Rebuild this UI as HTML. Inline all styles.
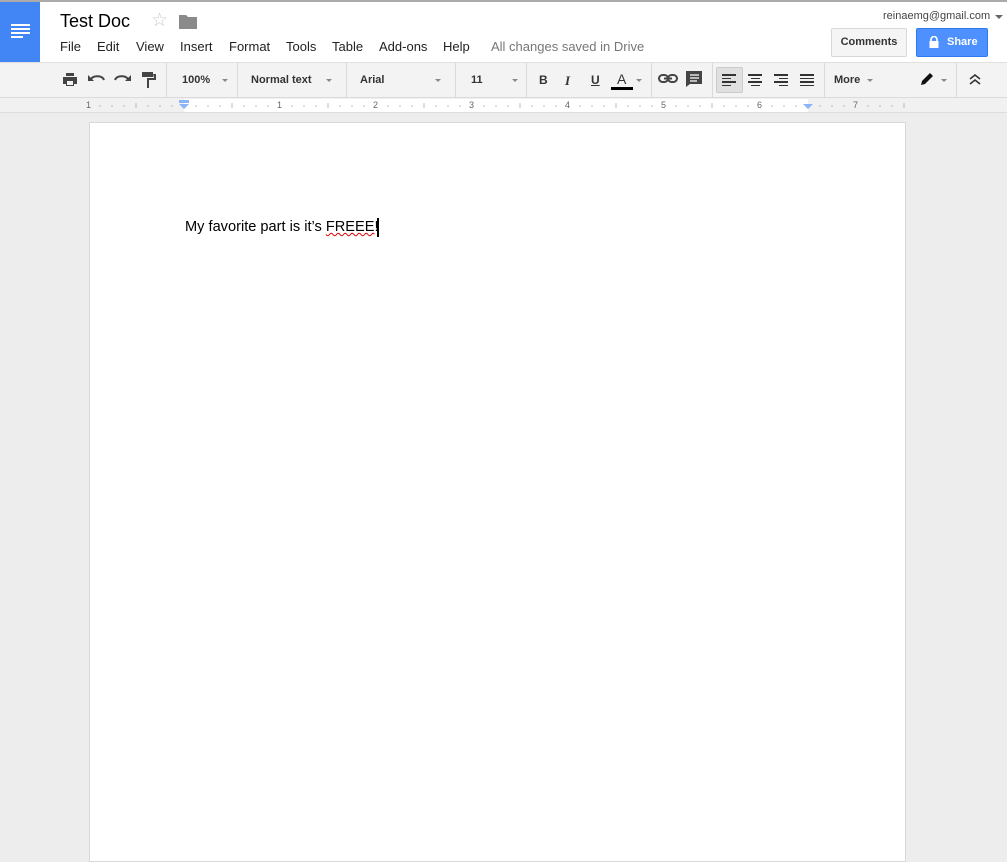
<!DOCTYPE html>
<html><head><style>
*{margin:0;padding:0;box-sizing:border-box}
body{width:1007px;height:850px;overflow:hidden;background:#ededed;font-family:"Liberation Sans",Arial,sans-serif;position:relative}
.a{position:absolute}
.menu span{position:absolute;top:39px;font-size:13px;color:#222}
.tb{font-size:11px;font-weight:bold;color:#333}
.sep{position:absolute;top:63px;width:1px;height:34px;background:#dadada}
.dd{position:absolute;width:0;height:0;border-left:3px solid transparent;border-right:3px solid transparent;border-top:3px solid #888}
.al div{height:1.5px;background:#333;margin-bottom:2px}
</style></head><body>
<div class="a" style="left:0;top:0;width:1007px;height:2px;background:#aaa"></div>
<div class="a" style="left:0;top:2px;width:1007px;height:60px;background:#fff"></div>
<div class="a" style="left:0;top:2px;width:40px;height:60px;background:#4285f4"></div>
<div class="a" style="left:11px;top:24px;width:19px">
<div style="height:2px;background:#fff;margin-bottom:2px"></div><div style="height:2px;background:#fff;margin-bottom:2px"></div><div style="height:2px;background:#fff;margin-bottom:2px"></div><div style="height:2px;width:12px;background:#fff"></div></div>
<div class="a" style="left:60px;top:11px;font-size:18px;color:#000">Test Doc</div>
<div class="a" style="left:151px;top:9px;font-size:19px;color:#ccc">☆</div>
<svg class="a" style="left:179px;top:14px" width="18" height="15"><path d="M0 1h7l2 2h9v12H0z" fill="#8a8a8a"/></svg>
<div class="menu">
<span style="left:60px">File</span><span style="left:97px">Edit</span><span style="left:136px">View</span><span style="left:180px">Insert</span><span style="left:229px">Format</span><span style="left:286px">Tools</span><span style="left:332px">Table</span><span style="left:379px">Add-ons</span><span style="left:443px">Help</span><span style="left:491px;color:#777">All changes saved in Drive</span></div>
<div class="a" style="left:883px;top:10px;font-size:11px;color:#444">reinaemg@gmail.com</div>
<div class="dd" style="left:995px;top:15px;border-top-color:#666;border-width:4px 4px 0"></div>
<div class="a" style="left:831px;top:28px;width:76px;height:29px;border:1px solid #d8d8d8;border-radius:2px;background:#f5f5f5;font-size:11px;font-weight:bold;color:#333;text-align:center;line-height:27px">Comments</div>
<div class="a" style="left:916px;top:28px;width:72px;height:29px;border:1px solid #3079ed;border-radius:2px;background:#4d90fe;font-size:11px;font-weight:bold;color:#fff;line-height:27px;padding-left:30px">Share</div>
<svg class="a" style="left:929px;top:36px" width="10" height="12"><path d="M2 5V3.5a3 3 0 0 1 6 0V5" stroke="#fff" stroke-width="1.6" fill="none"/><rect x="0.5" y="5" width="9" height="7" fill="#fff"/></svg>
<div class="a" style="left:0;top:62px;width:1007px;height:36px;background:#f3f3f3;border-top:1px solid #e0e0e0;border-bottom:1px solid #dadada"></div>
<svg class="a" style="left:62px;top:72px" width="16" height="15"><path d="M4 1h8v3H4zM1 5h14v7h-3v2H4v-2H1z" fill="#444"/><rect x="5" y="9" width="6" height="4" fill="#f3f3f3"/></svg>
<svg class="a" style="left:88px;top:73px" width="17" height="10"><path d="M3 6a7 5 0 0 1 13 1" stroke="#444" stroke-width="2" fill="none"/><path d="M0 2v6h6z" fill="#444"/></svg>
<svg class="a" style="left:114px;top:73px" width="17" height="10"><path d="M14 6a7 5 0 0 0-13 1" stroke="#444" stroke-width="2" fill="none"/><path d="M17 2v6h-6z" fill="#444"/></svg>
<svg class="a" style="left:141px;top:71px" width="16" height="18"><path d="M1 1h11v5H1zM12 3h3v6H8v8H6V7h7z" fill="#444"/></svg>
<div class="sep" style="left:166px"></div>
<div class="a tb" style="left:182px;top:74px">100%</div><div class="dd" style="left:222px;top:79px"></div>
<div class="sep" style="left:237px"></div>
<div class="a tb" style="left:251px;top:74px">Normal text</div><div class="dd" style="left:326px;top:79px"></div>
<div class="sep" style="left:346px"></div>
<div class="a tb" style="left:360px;top:74px">Arial</div><div class="dd" style="left:435px;top:79px"></div>
<div class="sep" style="left:455px"></div>
<div class="a tb" style="left:471px;top:74px">11</div><div class="dd" style="left:512px;top:79px"></div>
<div class="sep" style="left:526px"></div>
<div class="a" style="left:539px;top:73px;font-size:12px;font-weight:bold;color:#333">B</div>
<div class="a" style="left:565px;top:73px;font-size:13px;font-style:italic;font-family:'Liberation Serif',serif;font-weight:bold;color:#333">I</div>
<div class="a" style="left:591px;top:73px;font-size:12px;color:#333;text-decoration:underline;font-weight:bold">U</div>
<div class="a" style="left:617px;top:71px;font-size:14px;color:#333">A</div>
<div class="a" style="left:611px;top:87px;width:22px;height:3px;background:#000"></div>
<div class="dd" style="left:636px;top:79px"></div>
<div class="sep" style="left:651px"></div>
<svg class="a" style="left:658px;top:74px" width="20" height="10"><rect x="1" y="1" width="9" height="7" rx="3.5" stroke="#444" stroke-width="2" fill="none"/><rect x="10" y="1" width="9" height="7" rx="3.5" stroke="#444" stroke-width="2" fill="none"/><path d="M6 4.5h8" stroke="#444" stroke-width="2"/></svg>
<svg class="a" style="left:686px;top:71px" width="18" height="16"><path d="M0 0h16v13H4l-4 3z" fill="#444"/><path d="M4 4h9M4 7h9M4 10h7" stroke="#fff" stroke-width="1.2"/></svg>
<div class="sep" style="left:712px"></div>
<div class="a" style="left:716px;top:67px;width:27px;height:26px;background:#e0e0e0;border:1px solid #ccc;border-radius:2px"></div>
<div class="a al" style="left:722px;top:74px;width:14px"><div></div><div style="width:9px"></div><div></div><div style="width:9px"></div></div>
<div class="a al" style="left:748px;top:74px;width:14px"><div></div><div style="width:9px;margin-left:2.5px"></div><div></div><div style="width:9px;margin-left:2.5px"></div></div>
<div class="a al" style="left:774px;top:74px;width:14px"><div></div><div style="width:9px;margin-left:5px"></div><div></div><div style="width:9px;margin-left:5px"></div></div>
<div class="a al" style="left:800px;top:74px;width:14px"><div></div><div></div><div></div><div></div></div>
<div class="sep" style="left:824px"></div>
<div class="a tb" style="left:834px;top:74px">More</div><div class="dd" style="left:867px;top:79px"></div>
<svg class="a" style="left:920px;top:72px" width="14" height="14"><path d="M1 13l1-4 8-8 3 3-8 8z" fill="#111"/></svg>
<div class="dd" style="left:941px;top:79px"></div>
<div class="sep" style="left:956px"></div>
<svg class="a" style="left:969px;top:74px" width="12" height="11"><path d="M1 5l5-4 5 4M1 10l5-4 5 4" stroke="#333" stroke-width="1.6" fill="none"/></svg>
<div class="a" style="left:0;top:98px;width:1007px;height:15px;background:#f1f1f1;border-bottom:1px solid #ddd"></div>
<div class="a" style="left:184px;top:99px;width:624px;height:13px;background:#fff"></div>
<svg class="a" style="left:0;top:99px" width="1007" height="14" font-family="Liberation Sans" font-size="9" fill="#666">
<g stroke="#bbb" stroke-width="1">
<path d="M100 6v2M112 6v2M124 6v2M136 4v5M148 6v2M160 6v2M172 6v2M196 6v2M208 6v2M220 6v2M232 4v5M244 6v2M256 6v2M268 6v2M292 6v2M304 6v2M316 6v2M328 4v5M340 6v2M352 6v2M364 6v2M388 6v2M400 6v2M412 6v2M424 4v5M436 6v2M448 6v2M460 6v2M484 6v2M496 6v2M508 6v2M520 4v5M532 6v2M544 6v2M556 6v2M580 6v2M592 6v2M604 6v2M616 4v5M628 6v2M640 6v2M652 6v2M676 6v2M688 6v2M700 6v2M712 4v5M724 6v2M736 6v2M748 6v2M772 6v2M784 6v2M796 6v2M820 6v2M832 6v2M844 6v2M868 6v2M880 6v2M892 6v2M904 4v5"/></g>
<text x="86" y="9">1</text><text x="277" y="9">1</text><text x="373" y="9">2</text><text x="469" y="9">3</text><text x="565" y="9">4</text><text x="661" y="9">5</text><text x="757" y="9">6</text><text x="853" y="9">7</text>
<path d="M179 1h10v3h-10z M179 5h10l-5 5z" fill="#8ab4f8"/>
<path d="M803 5h10l-5 5z" fill="#8ab4f8"/>
</svg>
<div class="a" style="left:89px;top:122px;width:817px;height:740px;background:#fff;border:1px solid #d8d8d8"></div>
<div class="a" style="left:185px;top:219px;font-size:14.6px;color:#000;white-space:nowrap">My favorite part is it’s <span style="text-decoration:underline wavy #d00;text-decoration-thickness:1px">FREEE</span>!</div>
<div class="a" style="left:377px;top:218px;width:2px;height:19px;background:#000"></div>
</body></html>
